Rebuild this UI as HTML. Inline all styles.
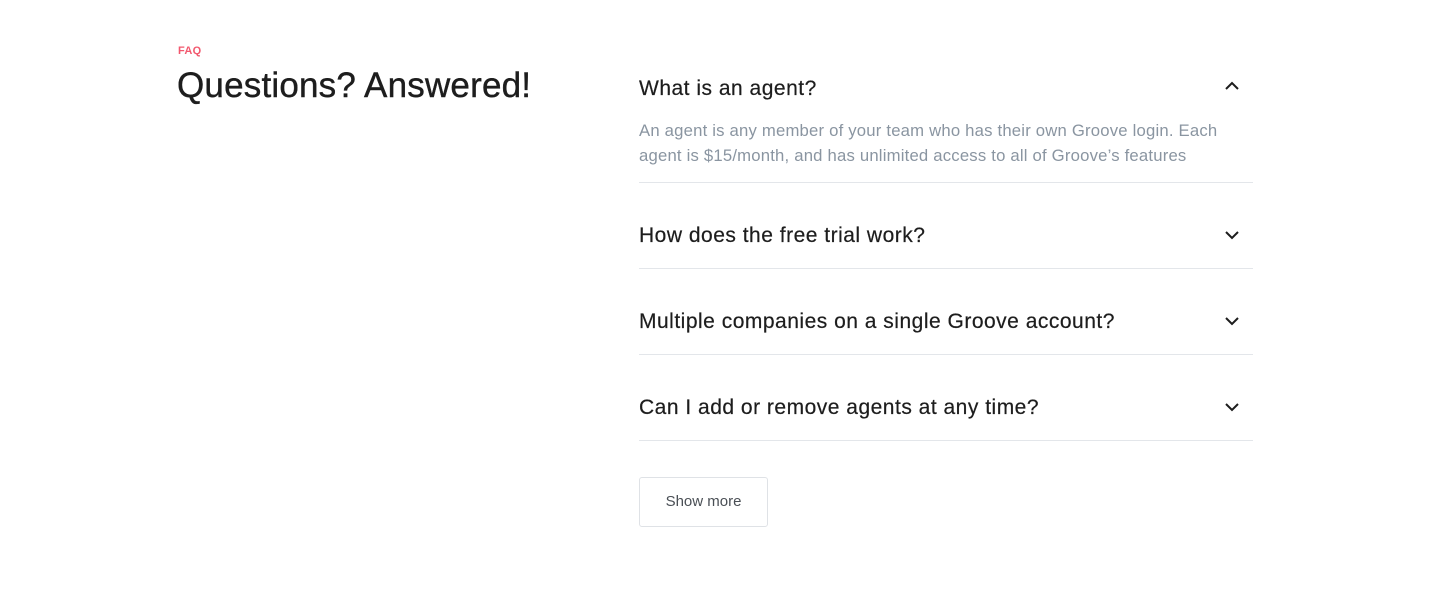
<!DOCTYPE html>
<html><head><meta charset="utf-8"><style>
*{margin:0;padding:0;box-sizing:border-box}
body{width:1431px;height:600px;background:#fff;font-family:"Liberation Sans",sans-serif;color:#1f1f1f;position:relative;overflow:hidden}
.faq{position:absolute;left:178px;top:45px;font-size:11px;font-weight:bold;color:#f2586e;letter-spacing:0.3px}
h1{position:absolute;left:177px;top:66px;font-size:35px;font-weight:normal;letter-spacing:0.2px;color:#1d1d1d;-webkit-text-stroke:0.4px #1d1d1d}
.q{position:absolute;left:639px;font-size:21px;letter-spacing:0.5px;color:#1d1d1d;-webkit-text-stroke:0.2px #1d1d1d}
.a{position:absolute;left:639px;top:118px;font-size:16.7px;letter-spacing:0.2px;line-height:25px;color:#8a95a1;white-space:nowrap}
.line{position:absolute;left:639px;width:614px;height:1px;background:#e3e6ea}
svg{position:absolute;left:1224px}
.btn{position:absolute;left:639px;top:477px;width:129px;height:50px;border:1px solid #dfe2e6;border-radius:3px;font-size:15px;color:#4a4f55;text-align:center;line-height:48px}
</style></head><body>
<div class="faq">FAQ</div>
<h1>Questions? Answered!</h1>
<div class="q" style="top:77px">What is an agent?</div>
<svg style="top:80px" width="16" height="12" viewBox="0 0 16 12"><path d="M2 9 L8 3 L14 9" fill="none" stroke="#1d1d1d" stroke-width="2"/></svg>
<div class="a">An agent is any member of your team who has their own Groove login. Each<br>agent is $15/month, and has unlimited access to all of Groove’s features</div>
<div class="line" style="top:182px"></div>
<div class="q" style="top:224px">How does the free trial work?</div>
<svg style="top:229px" width="16" height="12" viewBox="0 0 16 12"><path d="M2 3 L8 9 L14 3" fill="none" stroke="#1d1d1d" stroke-width="2"/></svg>
<div class="line" style="top:268px"></div>
<div class="q" style="top:310px">Multiple companies on a single Groove account?</div>
<svg style="top:315px" width="16" height="12" viewBox="0 0 16 12"><path d="M2 3 L8 9 L14 3" fill="none" stroke="#1d1d1d" stroke-width="2"/></svg>
<div class="line" style="top:354px"></div>
<div class="q" style="top:396px">Can I add or remove agents at any time?</div>
<svg style="top:401px" width="16" height="12" viewBox="0 0 16 12"><path d="M2 3 L8 9 L14 3" fill="none" stroke="#1d1d1d" stroke-width="2"/></svg>
<div class="line" style="top:440px"></div>
<div class="btn">Show more</div>
</body></html>
